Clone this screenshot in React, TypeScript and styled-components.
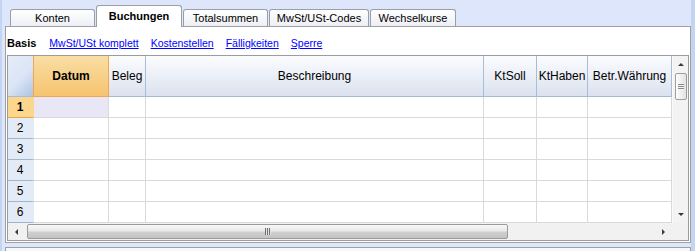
import styled, { createGlobalStyle } from 'styled-components';

const GlobalStyle = createGlobalStyle`
  html, body {
    margin: 0;
    padding: 0;
  }
  body {
    background: #dee6fc;
    font-family: 'Liberation Sans', Arial, sans-serif;
    color: #000;
  }
`;

const tabs = [
  { label: 'Konten', width: 85 },
  { label: 'Buchungen', width: 86, active: true },
  { label: 'Totalsummen', width: 85 },
  { label: 'MwSt/USt-Codes', width: 100 },
  { label: 'Wechselkurse', width: 86 },
];

const links = ['MwSt/USt komplett', 'Kostenstellen', 'Fälligkeiten', 'Sperre'];

const columns = [
  { title: 'Datum', width: 75, selected: true },
  { title: 'Beleg', width: 37 },
  { title: 'Beschreibung', width: 338 },
  { title: 'KtSoll', width: 53 },
  { title: 'KtHaben', width: 51 },
  { title: 'Betr.Währung', width: 84 },
];

const rows = [1, 2, 3, 4, 5, 6];

const S = {
  Page: styled.div`
    display: flex;
    width: 695px;
    height: 251px;
    overflow: hidden;
  `,
  EdgeStrip: styled.div<{ $width: number }>`
    width: ${(p) => p.$width}px;
    flex-shrink: 0;
    background: #c4d4f3;
  `,
  Main: styled.div`
    width: 686px;
    margin-left: 3px;
    display: flex;
    flex-direction: column;
  `,
  TabBar: styled.div`
    height: 26px;
    display: flex;
    align-items: flex-end;
    gap: 1px;
    padding-left: 5px;
    position: relative;
    z-index: 1;
  `,
  Tab: styled.div<{ $width: number; $active?: boolean }>`
    box-sizing: border-box;
    width: ${(p) => p.$width}px;
    height: ${(p) => (p.$active ? 22 : 17)}px;
    margin-bottom: ${(p) => (p.$active ? -1 : 0)}px;
    border: 1px solid #9a9fa6;
    border-bottom: none;
    border-radius: 3px 3px 0 0;
    background: ${(p) =>
      p.$active ? '#ffffff' : 'linear-gradient(#ffffff, #edeff5)'};
    display: flex;
    align-items: center;
    justify-content: center;
    font-size: 11px;
    font-weight: ${(p) => (p.$active ? 'bold' : 'normal')};
    padding-bottom: ${(p) => (p.$active ? 2 : 0)}px;
    white-space: nowrap;
  `,
  Panel: styled.div`
    box-sizing: border-box;
    height: 217px;
    border: 1px solid #a0a0a0;
    background: #ffffff;
    padding: 0 1px 1px 1px;
    display: flex;
    flex-direction: column;
  `,
  LinkRow: styled.div`
    height: 28px;
    box-sizing: border-box;
    padding-top: 9px;
    display: flex;
    align-items: baseline;
    gap: 12px;
    font-size: 10.5px;
    line-height: 14px;
  `,
  Basis: styled.span`
    font-weight: bold;
    font-size: 11px;
    margin-right: 1px;
  `,
  Link: styled.a`
    color: #0000ff;
    text-decoration: underline;
    cursor: pointer;
  `,
  GridBox: styled.div`
    box-sizing: border-box;
    height: 186px;
    border: 1px solid #9c9c9c;
    display: flex;
    flex-direction: column;
  `,
  GridBody: styled.div`
    display: flex;
    height: 167px;
  `,
  Table: styled.div`
    width: 664px;
    display: flex;
    flex-direction: column;
  `,
  Row: styled.div<{ $height: number }>`
    display: flex;
    height: ${(p) => p.$height}px;
  `,
  Corner: styled.div`
    box-sizing: border-box;
    width: 26px;
    border-right: 1px solid #f2a650;
    border-bottom: 1px solid #a9bcd5;
    background: linear-gradient(135deg, #e6edf9 0%, #dbe5f6 55%, #aec3e2 100%);
  `,
  HeadCell: styled.div<{ $width: number; $selected?: boolean }>`
    box-sizing: border-box;
    width: ${(p) => p.$width}px;
    border-right: 1px solid ${(p) => (p.$selected ? '#f2a650' : '#aabdd6')};
    border-bottom: 1px solid ${(p) => (p.$selected ? '#f2a650' : '#a6bad3')};
    background: ${(p) =>
      p.$selected
        ? 'linear-gradient(#f9dea4, #f6c46f)'
        : 'linear-gradient(#fbfcff, #dbe2ee)'};
    display: flex;
    align-items: center;
    justify-content: center;
    font-size: 12px;
    font-weight: ${(p) => (p.$selected ? 'bold' : 'normal')};
    white-space: nowrap;
    overflow: hidden;
  `,
  NumCell: styled.div<{ $current?: boolean }>`
    box-sizing: border-box;
    width: 26px;
    border-right: 1px solid ${(p) => (p.$current ? '#fdd68e' : '#e3ebf6')};
    border-bottom: 1px solid ${(p) => (p.$current ? '#f0a54a' : '#9fb6d0')};
    background: ${(p) => (p.$current ? '#fdd68e' : '#e3ebf6')};
    display: flex;
    align-items: center;
    justify-content: center;
    padding-right: 1px;
    font-size: 12px;
    font-weight: ${(p) => (p.$current ? 'bold' : 'normal')};
  `,
  Cell: styled.div<{ $width: number; $active?: boolean }>`
    box-sizing: border-box;
    width: ${(p) => p.$width}px;
    border-right: 1px solid #d9d9d9;
    border-bottom: 1px solid #d9d9d9;
    background: ${(p) => (p.$active ? '#e9e7f6' : '#ffffff')};
  `,
  VScroll: styled.div`
    width: 16px;
    display: flex;
    flex-direction: column;
    background: #f3f3f3;
    border-left: 1px solid #fafafa;
    box-sizing: border-box;
  `,
  HBar: styled.div`
    display: flex;
    height: 17px;
    background: #f1f1f1;
  `,
  HScroll: styled.div`
    width: 664px;
    display: flex;
    align-items: flex-start;
  `,
  ScrollCorner: styled.div`
    width: 16px;
    background: #f1f1f1;
  `,
  ArrowButton: styled.div<{ $vertical?: boolean }>`
    flex-shrink: 0;
    width: ${(p) => (p.$vertical ? 15 : 17)}px;
    height: 17px;
    display: flex;
    align-items: center;
    justify-content: center;
  `,
  Arrow: styled.div<{ $dir: 'up' | 'down' | 'left' | 'right' }>`
    width: 0;
    height: 0;
    ${(p) =>
      p.$dir === 'up'
        ? 'border-left: 3px solid transparent; border-right: 3px solid transparent; border-bottom: 3px solid #3a3a3a;'
        : p.$dir === 'down'
          ? 'border-left: 3px solid transparent; border-right: 3px solid transparent; border-top: 3px solid #3a3a3a;'
          : p.$dir === 'left'
            ? 'border-top: 3px solid transparent; border-bottom: 3px solid transparent; border-right: 3px solid #3a3a3a;'
            : 'border-top: 3px solid transparent; border-bottom: 3px solid transparent; border-left: 3px solid #3a3a3a;'}
  `,
  VThumb: styled.div`
    box-sizing: border-box;
    width: 12px;
    height: 27px;
    margin-left: 2px;
    border: 1px solid #9d9d9d;
    border-radius: 2px;
    background: linear-gradient(to right, #fdfdfd, #e2e2e2);
    display: flex;
    align-items: center;
    justify-content: center;
  `,
  HThumb: styled.div`
    box-sizing: border-box;
    width: 481px;
    height: 15px;
    margin-left: 2px;
    margin-top: 1px;
    border: 1px solid #9a9a9a;
    border-radius: 2px;
    background: linear-gradient(#f7f7f7 0%, #e9e9e9 45%, #cfcfcf 55%, #c3c3c3 100%);
    display: flex;
    align-items: center;
    justify-content: center;
  `,
  Grip: styled.div<{ $vertical?: boolean }>`
    width: 6px;
    height: ${(p) => (p.$vertical ? 6 : 7)}px;
    background: ${(p) =>
      p.$vertical
        ? 'repeating-linear-gradient(to bottom, #8a8a8a 0 1px, #f4f4f4 1px 2px)'
        : 'repeating-linear-gradient(to right, #707070 0 1px, #e6e6e6 1px 2px)'};
  `,
  Spacer: styled.div`
    flex: 1;
  `,
  BottomPanel: styled.div`
    flex: 1;
    margin-top: 4px;
    border: 1px solid #a0a0a0;
    border-bottom: none;
    background: #f6f7fb;
  `,
};

const App = () => {
  return (
    <>
      <GlobalStyle />
      <S.Page>
        <S.EdgeStrip $width={2} />
        <S.Main>
          <S.TabBar>
            {tabs.map((t) => (
              <S.Tab key={t.label} $width={t.width} $active={t.active}>
                {t.label}
              </S.Tab>
            ))}
          </S.TabBar>
          <S.Panel>
            <S.LinkRow>
              <S.Basis>Basis</S.Basis>
              {links.map((l) => (
                <S.Link key={l}>{l}</S.Link>
              ))}
            </S.LinkRow>
            <S.GridBox>
              <S.GridBody>
                <S.Table>
                  <S.Row $height={41}>
                    <S.Corner />
                    {columns.map((c) => (
                      <S.HeadCell key={c.title} $width={c.width} $selected={c.selected}>
                        {c.title}
                      </S.HeadCell>
                    ))}
                  </S.Row>
                  {rows.map((r) => (
                    <S.Row key={r} $height={21}>
                      <S.NumCell $current={r === 1}>{r}</S.NumCell>
                      {columns.map((c) => (
                        <S.Cell key={c.title} $width={c.width} $active={r === 1 && c.selected} />
                      ))}
                    </S.Row>
                  ))}
                </S.Table>
                <S.VScroll>
                  <S.ArrowButton $vertical>
                    <S.Arrow $dir='up' />
                  </S.ArrowButton>
                  <S.VThumb>
                    <S.Grip $vertical />
                  </S.VThumb>
                  <S.Spacer />
                  <S.ArrowButton $vertical>
                    <S.Arrow $dir='down' />
                  </S.ArrowButton>
                </S.VScroll>
              </S.GridBody>
              <S.HBar>
                <S.HScroll>
                  <S.ArrowButton>
                    <S.Arrow $dir='left' />
                  </S.ArrowButton>
                  <S.HThumb>
                    <S.Grip />
                  </S.HThumb>
                  <S.Spacer />
                  <S.ArrowButton>
                    <S.Arrow $dir='right' />
                  </S.ArrowButton>
                </S.HScroll>
                <S.ScrollCorner />
              </S.HBar>
            </S.GridBox>
          </S.Panel>
          <S.BottomPanel />
        </S.Main>
        <S.EdgeStrip $width={4} />
      </S.Page>
    </>
  );
};

export default App;
